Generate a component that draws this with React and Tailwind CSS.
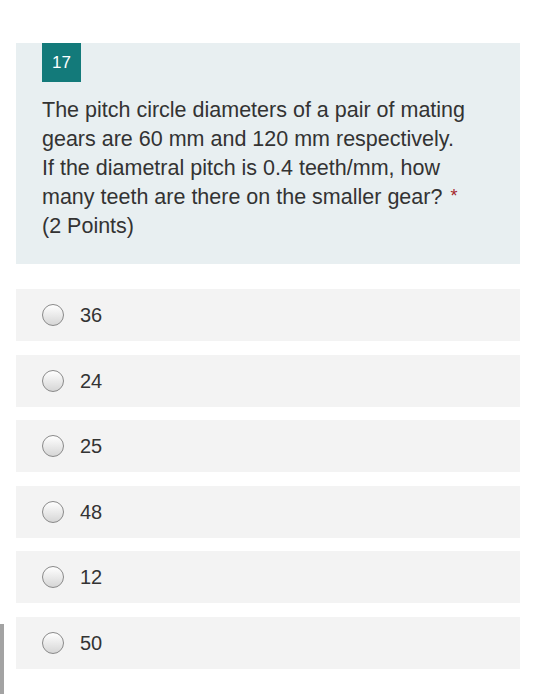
const OPTIONS = ['36', '24', '25', '48', '12', '50']

function Radio() {
  return (
    <span className="block h-[22px] w-[22px] shrink-0 rounded-full border border-[#8a8a8a] bg-gradient-to-b from-white to-[#d6d6d6]" />
  )
}

export default function App() {
  return (
    <div className="relative min-h-[700px] bg-white pt-[43px] pl-4 pr-[18px] font-['Liberation_Sans',Arial,sans-serif] text-[#333]">
      <div className="bg-[#e8eff1] pl-[26px] pr-4 pb-[23px]">
        <div className="flex h-[39px] w-[39px] items-center justify-center bg-[#137a7a] text-[17px] text-white">
          17
        </div>
        <p className="mt-[14px] w-[426px] text-[21.5px] leading-[29px]">
          The pitch circle diameters of a pair of mating gears are 60 mm and 120 mm respectively. If the diametral pitch is 0.4 teeth/mm, how many teeth are there on the smaller gear?
          <span className="ml-[8px] inline-block align-[2px] text-[18px] leading-none text-[#a4262c]">*</span>
          <br />
          (2 Points)
        </p>
      </div>

      <div className="mt-[25px] flex flex-col gap-[13.5px]">
        {OPTIONS.map((o) => (
          <div key={o} className="flex h-[52px] items-center gap-4 bg-[#f3f3f3] pl-[26px]">
            <Radio />
            <span className="text-[20px]">{o}</span>
          </div>
        ))}
      </div>

      <div className="absolute left-0 top-[624px] h-[70px] w-[4px] bg-[#a3a3a3]" />
    </div>
  )
}
